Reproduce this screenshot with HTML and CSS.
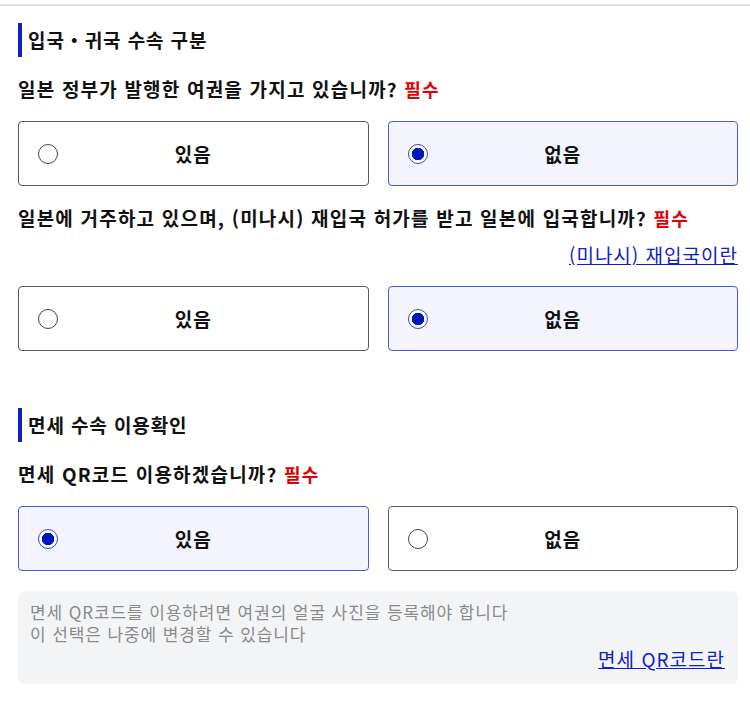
FILE: index.html
```html
<!DOCTYPE html>
<html lang="ko">
<head>
<meta charset="utf-8">
<link rel="stylesheet" href="styles.css">
</head>
<body>
<div class="rule"></div>
<main class="page">
  <section class="section">
    <h2 class="sec-title">입국・귀국 수속 구분</h2>
    <p class="question">일본 정부가 발행한 여권을 가지고 있습니까? <span class="req">필수</span></p>
    <div class="options">
      <label class="opt"><span class="radio"></span><span class="opt-label">있음</span></label>
      <label class="opt selected"><span class="radio"></span><span class="opt-label">없음</span></label>
    </div>
    <p class="question q2">일본에 거주하고 있으며, (미나시) 재입국 허가를 받고 일본에 입국합니까? <span class="req">필수</span></p>
    <div class="link-row"><a class="link" href="#">(미나시) 재입국이란</a></div>
    <div class="options opts2">
      <label class="opt"><span class="radio"></span><span class="opt-label">있음</span></label>
      <label class="opt selected"><span class="radio"></span><span class="opt-label">없음</span></label>
    </div>
  </section>
  <section class="section sec2">
    <h2 class="sec-title">면세 수속 이용확인</h2>
    <p class="question">면세 QR코드 이용하겠습니까? <span class="req">필수</span></p>
    <div class="options">
      <label class="opt selected"><span class="radio"></span><span class="opt-label">있음</span></label>
      <label class="opt"><span class="radio"></span><span class="opt-label">없음</span></label>
    </div>
    <div class="note">
      <p class="note-line">면세 QR코드를 이용하려면 여권의 얼굴 사진을 등록해야 합니다</p>
      <p class="note-line">이 선택은 나중에 변경할 수 있습니다</p>
      <div class="link-row"><a class="link" href="#">면세 QR코드란</a></div>
    </div>
  </section>
</main>
</body>
</html>
```
FILE: styles.css
```css
* { box-sizing: border-box; }
html, body { margin: 0; padding: 0; background: #fff; }
body {
  font-family: "Noto Sans CJK KR", "Noto Sans", sans-serif;
  color: #111;
}
.rule {
  margin-top: 4px;
  height: 2px;
  background: #e2e2e2;
}
.page {
  padding: 0 12px 0 18px;
}
.sec-title {
  margin: 17px 0 0;
  border-left: 4px solid #0b22c4;
  padding-left: 6px;
  height: 34px;
  line-height: 34px;
  font-size: 19px;
  letter-spacing: 0.9px;
  font-weight: 700;
}
.sec2 .sec-title { margin-top: 57px; }
.question {
  margin: 18px 0 0;
  font-size: 19px;
  letter-spacing: 1.2px;
  line-height: 28px;
  font-weight: 700;
}
.req { color: #e00000; font-size: 18px; letter-spacing: 1.2px; }
.options {
  margin-top: 18px;
  display: grid;
  grid-template-columns: 1fr 1fr;
  gap: 19px;
}
.opt {
  position: relative;
  display: flex;
  align-items: center;
  justify-content: center;
  height: 65px;
  border: 1px solid #5a5a5a;
  border-radius: 4px;
  background: #fff;
  cursor: pointer;
}
.opt.selected {
  border-color: #4a5ad6;
  background: #f3f4fe;
}
.radio {
  position: absolute;
  left: 19px;
  top: 50%;
  margin-top: -10px;
  width: 20px;
  height: 20px;
  border-radius: 50%;
  border: 1px solid #444;
  background: #fff;
}
.opt.selected .radio {
  border: 1.5px solid #3348d6;
  background: radial-gradient(circle, #0016c0 0 6px, #fff 6.5px);
}
.opt-label {
  font-size: 19px;
  letter-spacing: 1px;
  font-weight: 700;
}
.q2 { margin-top: 18px; }
.link-row {
  display: flex;
  justify-content: flex-end;
  margin-top: 11px;
}
.opts2 { margin-top: 19px; }
.link {
  color: #1020c8;
  font-size: 19px;
  letter-spacing: 1px;
  line-height: 24px;
  text-decoration: underline;
}
.note {
  margin-top: 20px;
  background: #f3f4f6;
  border-radius: 6px;
  padding: 10px 13px 13px 12px;
}
.note-line {
  margin: 0;
  color: #8a8a8a;
  font-size: 17px;
  letter-spacing: 0.9px;
  line-height: 22px;
}
.note .link-row { margin-top: 2px; }
```
